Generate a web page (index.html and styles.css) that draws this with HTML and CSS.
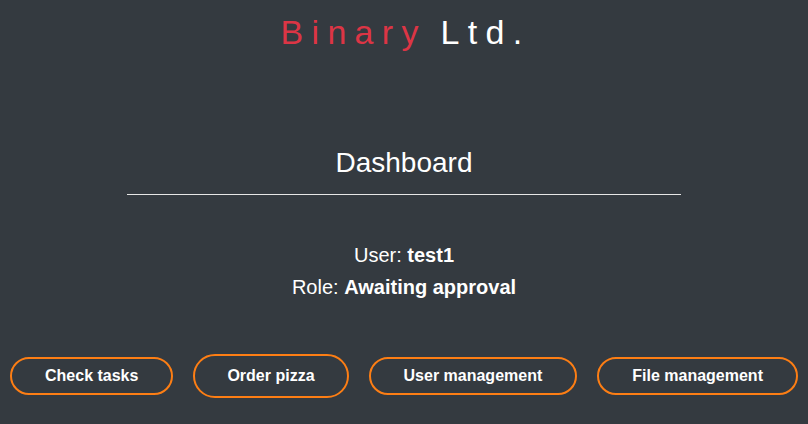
FILE: index.html
```html
<!DOCTYPE html>
<html>
<head>
<meta charset="utf-8">
<link rel="stylesheet" href="styles.css">
</head>
<body>
<header class="brand"><span class="brand-red">Binary</span> <span class="brand-white">Ltd.</span></header>
<main class="content">
  <h1 class="title">Dashboard</h1>
  <hr class="divider">
  <div class="info">
    <p class="info-line">User: <b>test1</b></p>
    <p class="info-line">Role: <b>Awaiting approval</b></p>
  </div>
  <nav class="actions">
    <button class="btn">Check tasks</button>
    <button class="btn btn-active">Order pizza</button>
    <button class="btn">User management</button>
    <button class="btn">File management</button>
  </nav>
</main>
</body>
</html>
```

FILE: styles.css
```css
html, body {
  height: 100%;
}
body {
  margin: 0;
  padding: 0 8px;
  background: #343a40;
  color: #fff;
  font-family: "Liberation Sans", Arial, sans-serif;
  box-sizing: border-box;
}
.brand {
  text-align: center;
  font-size: 34px;
  letter-spacing: 8.3px;
  word-spacing: -4px;
  line-height: 40px;
  padding-top: 12px;
  margin-left: 3px;
}
.brand-red { color: #dc3545; }
.brand-white { color: #fff; }
.content {
  display: flex;
  flex-direction: column;
  align-items: center;
}
.title {
  margin: 95px 0 0;
  font-size: 28px;
  font-weight: normal;
  line-height: 32px;
}
.divider {
  width: 70%;
  margin: 15px 0 0;
  border: 0;
  border-top: 1px solid #e6e6e6;
  height: 0;
}
.info {
  margin-top: 44px;
  text-align: center;
  font-size: 20px;
}
.info-line {
  margin: 0;
  line-height: 32px;
}
.actions {
  margin-top: 51px;
  display: flex;
  gap: 20px;
  justify-content: center;
  align-items: center;
}
.btn {
  background: transparent;
  color: #fff;
  font-family: "Liberation Sans", Arial, sans-serif;
  font-weight: bold;
  font-size: 16px;
  border: 2px solid #fd7e14;
  border-radius: 20px;
  padding: 0 33px;
  height: 38px;
}
.btn-active {
  height: 44px;
  padding: 0 32px;
  border-radius: 22px;
}
```
